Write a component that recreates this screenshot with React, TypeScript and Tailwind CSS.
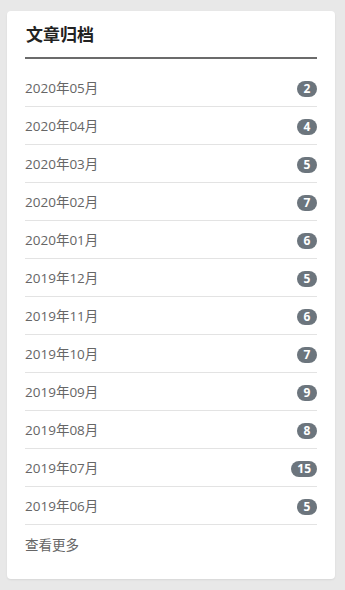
const archives = [
  { month: '2020年05月', count: 2 },
  { month: '2020年04月', count: 4 },
  { month: '2020年03月', count: 5 },
  { month: '2020年02月', count: 7 },
  { month: '2020年01月', count: 6 },
  { month: '2019年12月', count: 5 },
  { month: '2019年11月', count: 6 },
  { month: '2019年10月', count: 7 },
  { month: '2019年09月', count: 9 },
  { month: '2019年08月', count: 8 },
  { month: '2019年07月', count: 15 },
  { month: '2019年06月', count: 5 },
]

export default function App() {
  return (
    <div className="min-h-screen bg-[#e8e8e8] pt-[11px] pl-[7px] pr-[10px] pb-[10px] font-['Open_Sans','Noto_Sans_CJK_SC',sans-serif]">
      <div className="bg-white rounded-[4px] shadow-[0_1px_2px_rgba(0,0,0,0.08)] px-[18px] pb-[16px]">
        <div className="h-[48px] flex items-center border-b-2 border-[#6b6b6b]">
          <h3 className="text-[17px] font-semibold text-[#222] pl-[1px] pt-[1px]">文章归档</h3>
        </div>
        <ul className="mt-[10px]">
          {archives.map((a) => (
            <li key={a.month} className="h-[38px] flex items-center justify-between border-b border-[#e3e3e3] pt-[2px]">
              <a className="text-[13.5px] text-[#666]">{a.month}</a>
              <span className="h-[16px] min-w-[20px] px-[6px] rounded-full bg-[#6c757d] text-white text-[12px] font-bold flex items-center justify-center leading-none">
                {a.count}
              </span>
            </li>
          ))}
        </ul>
        <div className="h-[38px] flex items-center pt-[3px]">
          <a className="text-[13.5px] text-[#666]">查看更多</a>
        </div>
      </div>
    </div>
  )
}
